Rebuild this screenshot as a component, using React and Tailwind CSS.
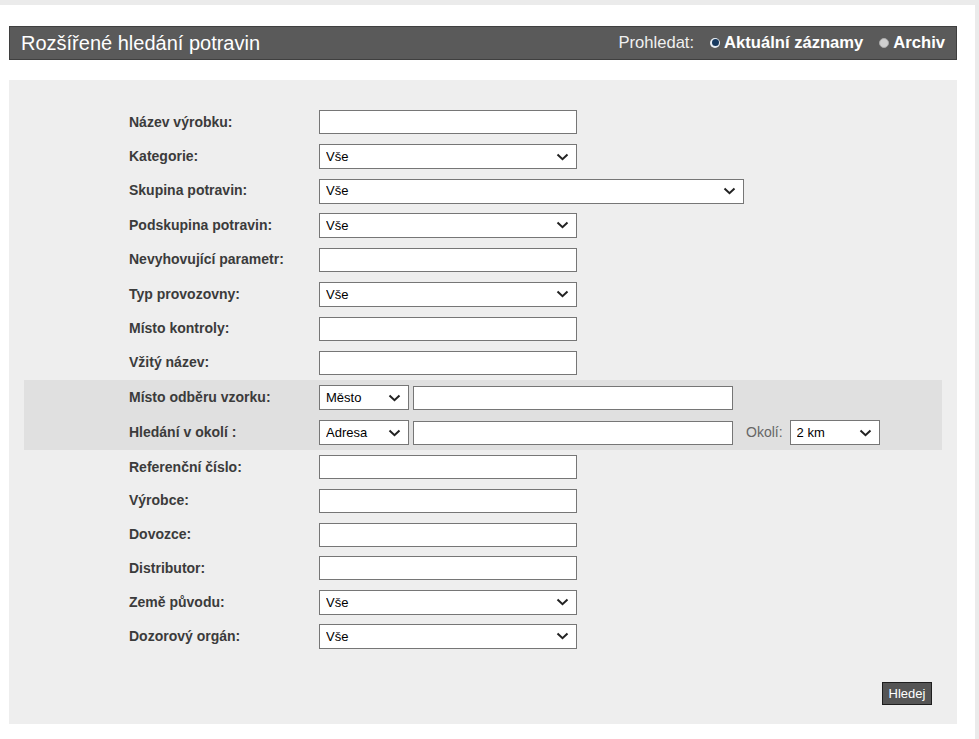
import React from "react";

const font = { fontFamily: '"Liberation Sans", Arial, sans-serif' };

function Chevron() {
  return (
    <svg
      width="13"
      height="8"
      viewBox="0 0 13 8"
      className="pointer-events-none absolute right-[8px] top-1/2 -translate-y-1/2"
    >
      <path d="M1.5 1.5 L6.5 6.2 L11.5 1.5" fill="none" stroke="#222" strokeWidth="2" />
    </svg>
  );
}

function Select({ value, width }) {
  return (
    <div className={`relative h-[25px] ${width}`}>
      <select
        defaultValue={value}
        className="h-full w-full appearance-none border border-[#767676] bg-white pl-[6px] text-[13px] text-black outline-none"
        style={font}
      >
        <option>{value}</option>
      </select>
      <Chevron />
    </div>
  );
}

function Input({ width = "w-[258px]" }) {
  return <input type="text" className={`h-[24px] ${width} border border-[#767676] bg-white outline-none`} />;
}

function Row({ label, children, h = "h-[34.4px]" }) {
  return (
    <div className={`flex ${h} items-center`}>
      <label className="w-[190px] text-[14px] font-bold text-[#3b3b3b]">{label}</label>
      <div className="flex items-center gap-[4px]">{children}</div>
    </div>
  );
}

export default function App() {
  const top = [
    ["Název výrobku:", <Input />],
    ["Kategorie:", <Select value="Vše" width="w-[258px]" />],
    ["Skupina potravin:", <Select value="Vše" width="w-[425px]" />],
    ["Podskupina potravin:", <Select value="Vše" width="w-[258px]" />],
    ["Nevyhovující parametr:", <Input />],
    ["Typ provozovny:", <Select value="Vše" width="w-[258px]" />],
    ["Místo kontroly:", <Input />],
    ["Vžitý název:", <Input />],
  ];
  const bottom = [
    ["Referenční číslo:", <Input />],
    ["Výrobce:", <Input />],
    ["Dovozce:", <Input />],
    ["Distributor:", <Input />],
    ["Země původu:", <Select value="Vše" width="w-[258px]" />],
    ["Dozorový orgán:", <Select value="Vše" width="w-[258px]" />],
  ];

  return (
    <div className="min-h-[739px] bg-[#ebebeb] pt-[5px] pr-[4px]" style={font}>
      <div className="min-h-[734px] bg-white pl-[9px] pt-[21px]">
        <div className="w-[948px]">
          <div className="flex h-[34px] items-center justify-between border border-[#3f3f3f] bg-[#5a5a5a] pl-[11px] pr-[11px] text-white">
            <h1 className="text-[20px] leading-none">Rozšířené hledání potravin</h1>
            <div className="flex items-center text-[16.6px]">
              <span className="mr-[16px] text-[#f0f0f0]">Prohledat:</span>
              <span className="mr-[4px] flex h-[10px] w-[10px] items-center justify-center rounded-full bg-[#e8eef4]">
                <span className="h-[7px] w-[7px] rounded-full bg-[#173a60]" />
              </span>
              <span className="mr-[16px] font-bold">Aktuální záznamy</span>
              <span className="mr-[4px] h-[10px] w-[10px] rounded-full border border-[#aaa] bg-[#cfcfcf]" />
              <span className="font-bold">Archiv</span>
            </div>
          </div>

          <div className="mt-[20px] flex h-[644px] flex-col bg-[#eeeeee] px-[15px] pt-[25px]">
            <div className="pl-[105px]">
              {top.map(([l, c]) => (
                <Row key={l} label={l}>
                  {c}
                </Row>
              ))}
            </div>
            <div className="bg-[#e0e0e0] pl-[105px]">
              <Row label="Místo odběru vzorku:" h="h-[35px]">
                <Select value="Město" width="w-[90px]" />
                <Input width="w-[320px]" />
              </Row>
              <Row label="Hledání v okolí :" h="h-[35px]">
                <Select value="Adresa" width="w-[90px]" />
                <Input width="w-[320px]" />
                <span className="ml-[9px] mr-[3px] text-[14px] text-[#666]">Okolí:</span>
                <Select value="2 km" width="w-[90px]" />
              </Row>
            </div>
            <div className="pl-[105px]">
              {bottom.map(([l, c]) => (
                <Row key={l} label={l} h="h-[33.8px]">
                  {c}
                </Row>
              ))}
            </div>
            <div className="mt-auto mb-[19px] flex justify-end pr-[10px]">
              <button
                type="button"
                className="h-[23px] w-[50px] border border-[#1e1e1e] bg-[#555] text-[13px] text-white"
              >
                Hledej
              </button>
            </div>
          </div>
        </div>
      </div>
    </div>
  );
}
